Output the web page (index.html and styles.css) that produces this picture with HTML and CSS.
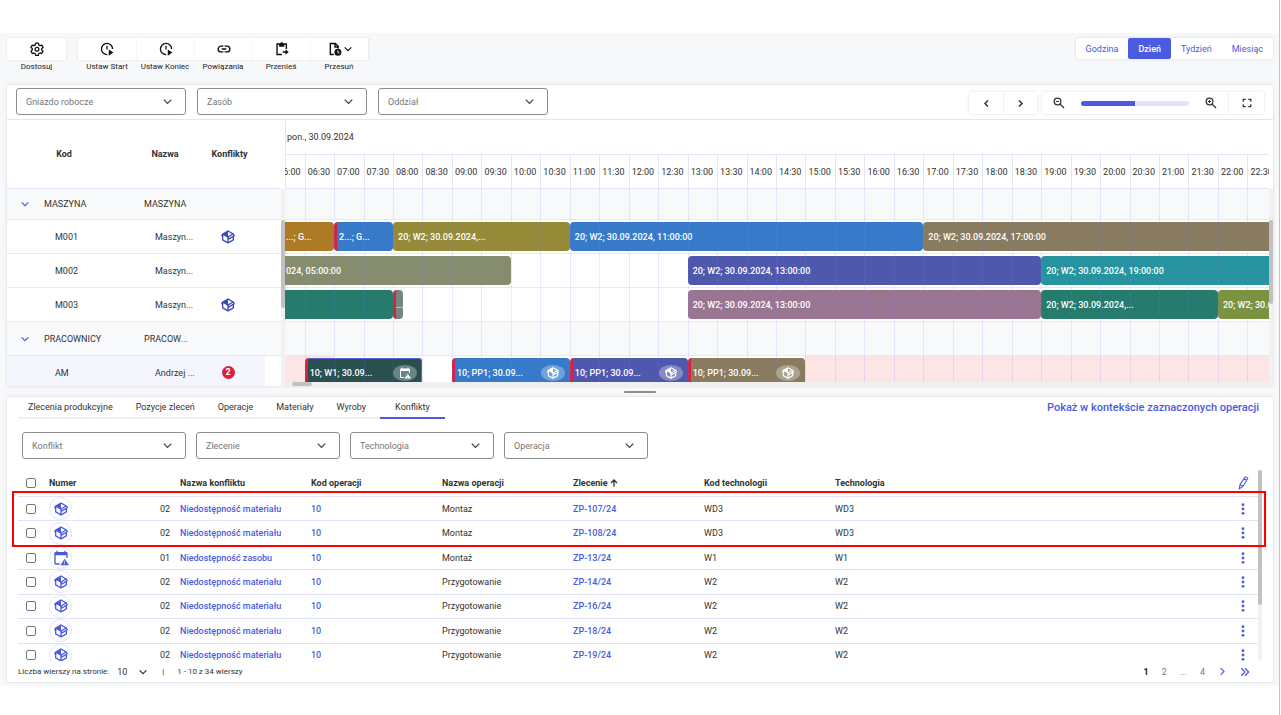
FILE: index.html
```html
<!DOCTYPE html>
<html lang="pl">
<head>
<meta charset="utf-8">
<title>Harmonogram</title>
<link rel="stylesheet" href="styles.css">
</head>
<body>
<svg class="sprite" aria-hidden="true">
  <symbol id="i-cube" viewBox="0 0 24 24"><path fill="currentColor" d="M2,10.96C1.5,10.68 1.35,10.07 1.63,9.59L3.13,7C3.24,6.8 3.41,6.66 3.6,6.58L11.43,2.18C11.59,2.06 11.79,2 12,2C12.21,2 12.41,2.06 12.57,2.18L20.47,6.62C20.66,6.72 20.82,6.88 20.91,7.08L22.36,9.6C22.64,10.08 22.47,10.69 22,10.96L21,11.54V16.5C21,16.88 20.79,17.21 20.47,17.38L12.57,21.82C12.41,21.94 12.21,22 12,22C11.79,22 11.59,21.94 11.43,21.82L3.53,17.38C3.21,17.21 3,16.88 3,16.5V10.96C2.7,11.13 2.32,11.14 2,10.96M12,4.15L12,10.85L17.96,7.5L12,4.15M5,15.91L11,19.29V12.58L5,9.21V15.91M19,15.91V12.69L14,15.59C13.67,15.77 13.3,15.76 13,15.6V19.29L19,15.91M13.85,13.36L20.13,9.73L19.55,8.72L13.27,12.35L13.85,13.36Z"/></symbol>
  <symbol id="i-calendar" viewBox="0 0 24 24"><path fill="currentColor" d="M2 5a2 2 0 0 1 2-2h1V1h2v2h10V1h2v2h1a2 2 0 0 1 2 2v7h-2V8H4v12h6v2H4a2 2 0 0 1-2-2zM17.500 13L24 23H11zM17 16v3h1v-3zm0 4v1.500h1V20z"/></symbol>
  <symbol id="i-gear" viewBox="0 0 24 24"><path fill="none" stroke="currentColor" stroke-width="2.200" stroke-linejoin="round" d="M9.700 2h4.600l.6 3 2.300 1.300 2.900-1 2.300 4-2.300 2v2.500l2.300 2-2.300 4-2.900-1-2.300 1.300-.6 2.900H9.700l-.6-2.900-2.300-1.300-2.900 1-2.300-4 2.300-2v-2.500l-2.300-2 2.300-4 2.900 1L9.100 5z"/><circle cx="12" cy="12.500" r="3.200" fill="none" stroke="currentColor" stroke-width="2.200"/></symbol>
  <symbol id="i-clock" viewBox="0 0 24 24"><path fill="none" stroke="currentColor" stroke-width="2.200" d="M12.500 21.500A9.500 9.500 0 1 1 21.500 12M12 6.500V13"/><path fill="currentColor" d="M15 13l8 5-8 5.500z"/></symbol>
  <symbol id="i-link" viewBox="0 0 24 24"><path fill="none" stroke="currentColor" stroke-width="2.400" d="M11 7H7a5 5 0 0 0 0 10h4M13 7h4a5 5 0 0 1 0 10h-4M8 12h8"/></symbol>
  <symbol id="i-clipboard" viewBox="0 0 24 24"><path fill="none" stroke="currentColor" stroke-width="2.400" d="M12 21.500H3.500v-18h16V12"/><path fill="currentColor" d="M7 3h2a2.500 2.500 0 0 1 5 0h2v5H7zM13 16h5v-3.500l5.500 4.700-5.500 4.600V18.400h-5z"/></symbol>
  <symbol id="i-file" viewBox="0 0 24 24"><path fill="none" stroke="currentColor" stroke-width="2.400" d="M10 21.500H4v-19h8.500l5 5V11M12 3v5.500h5"/><path fill="currentColor" fill-rule="evenodd" d="M17 11.500a6 6 0 1 1 0 12 6 6 0 0 1 0-12zm-.8 2.500v4l2.800 2 .9-1.200-2.200-1.500V14z"/></symbol>
  <symbol id="i-down" viewBox="0 0 24 24"><path fill="none" stroke="currentColor" stroke-width="3.600" d="M2 7l10 10L22 7"/></symbol>
  <symbol id="i-left" viewBox="0 0 24 24"><path fill="none" stroke="currentColor" stroke-width="4" d="M16 4l-8 8 8 8"/></symbol>
  <symbol id="i-right" viewBox="0 0 24 24"><path fill="none" stroke="currentColor" stroke-width="4" d="M8 4l8 8-8 8"/></symbol>
  <symbol id="i-next" viewBox="0 0 24 24"><path fill="none" stroke="currentColor" stroke-width="3" d="M7 3l9 9-9 9"/></symbol>
  <symbol id="i-last" viewBox="0 0 24 24"><path fill="none" stroke="currentColor" stroke-width="3" d="M3 3l9 9-9 9M12 3l9 9-9 9"/></symbol>
  <symbol id="i-minus" viewBox="0 0 24 24"><g fill="none" stroke="currentColor" stroke-width="2.400"><circle cx="9" cy="9" r="6.800"/><path d="M6 9h6M14 14l8 8"/></g></symbol>
  <symbol id="i-plus" viewBox="0 0 24 24"><g fill="none" stroke="currentColor" stroke-width="2.400"><circle cx="9" cy="9" r="6.800"/><path d="M6 9h6M9 6v6M14 14l8 8"/></g></symbol>
  <symbol id="i-full" viewBox="0 0 24 24"><path fill="none" stroke="currentColor" stroke-width="3" d="M3 9V3.500h6M15 3.500h6V9M21 15v5.500h-6M9 20.500H3V15"/></symbol>
  <symbol id="i-up" viewBox="0 0 24 24"><path fill="none" stroke="currentColor" stroke-width="4" d="M12 23V4M3 12l9-9 9 9"/></symbol>
  <symbol id="i-pencil" viewBox="0 0 20 26"><path fill="none" stroke="currentColor" stroke-width="2" stroke-linejoin="round" d="M2 24l1.500-8L13 2q3-1 5 2.500L9 19zM3.500 16L9 19M11 5l5.500 3.500"/></symbol>
  <symbol id="i-dots" viewBox="0 0 4 12"><g fill="currentColor"><circle cx="2" cy="1.700" r="1.400"/><circle cx="2" cy="6" r="1.400"/><circle cx="2" cy="10.300" r="1.400"/></g></symbol>
</svg>

<main class="app">
  <header class="topbar">
    <div class="tools">
      <div class="tool solo"><button type="button" aria-labelledby="t1"><svg class="ic14"><use href="#i-gear"/></svg></button><span id="t1">Dostosuj</span></div>
    </div>
    <div class="tools">
      <div class="tool"><button type="button" aria-labelledby="t2"><svg class="ic14"><use href="#i-clock"/></svg></button><span id="t2">Ustaw Start</span></div>
      <div class="tool"><button type="button" aria-labelledby="t3"><svg class="ic14"><use href="#i-clock"/></svg></button><span id="t3">Ustaw Koniec</span></div>
      <div class="tool"><button type="button" aria-labelledby="t4"><svg class="ic14"><use href="#i-link"/></svg></button><span id="t4">Powiązania</span></div>
      <div class="tool"><button type="button" aria-labelledby="t5"><svg class="ic14"><use href="#i-clipboard"/></svg></button><span id="t5">Przenieś</span></div>
      <div class="tool"><button type="button" aria-labelledby="t6"><svg class="ic14"><use href="#i-file"/></svg><svg class="ic8"><use href="#i-down"/></svg></button><span id="t6">Przesuń</span></div>
    </div>
    <div class="scale">
      <button type="button">Godzina</button><button type="button" class="active">Dzień</button><button type="button">Tydzień</button><button type="button">Miesiąc</button>
    </div>
  </header>

  <section class="card planner">
    <div class="filterbar">
      <div class="field wide"><select aria-label="Gniazdo robocze"><option>Gniazdo robocze</option></select><svg class="ic9"><use href="#i-down"/></svg></div>
      <div class="field wide"><select aria-label="Zasób"><option>Zasób</option></select><svg class="ic9"><use href="#i-down"/></svg></div>
      <div class="field wide"><select aria-label="Oddział"><option>Oddział</option></select><svg class="ic9"><use href="#i-down"/></svg></div>
      <div class="group nav">
        <button type="button" aria-label="Poprzedni"><svg class="ic9"><use href="#i-left"/></svg></button>
        <button type="button" aria-label="Następny"><svg class="ic9"><use href="#i-right"/></svg></button>
      </div>
      <div class="group zoom">
        <button type="button" aria-label="Pomniejsz"><svg class="ic12"><use href="#i-minus"/></svg></button>
        <input type="range" class="range" aria-label="Skala" min="0" max="100" value="50">
        <button type="button" aria-label="Powiększ"><svg class="ic12"><use href="#i-plus"/></svg></button>
        <button type="button" class="full" aria-label="Pełny ekran"><svg class="ic10"><use href="#i-full"/></svg></button>
      </div>
    </div>
    <div class="gantt">
      <table class="resources">
        <colgroup><col class="c-code"><col class="c-name"><col class="c-conf"><col class="c-gap"><col></colgroup>
        <thead><tr><th>Kod</th><th>Nazwa</th><th>Konflikty</th><th></th><th></th></tr></thead>
        <tbody>
          <tr class="parent first"><td><span class="code"><svg class="ic8"><use href="#i-down"/></svg>MASZYNA</span></td><td>MASZYNA</td><td></td><td></td><td></td></tr>
          <tr><td>M001</td><td>Maszyn...</td><td><svg class="ic16"><use href="#i-cube"/></svg></td><td></td><td></td></tr>
          <tr><td>M002</td><td>Maszyn...</td><td></td><td></td><td></td></tr>
          <tr><td>M003</td><td>Maszyn...</td><td><svg class="ic16"><use href="#i-cube"/></svg></td><td></td><td></td></tr>
          <tr class="parent"><td><span class="code"><svg class="ic8"><use href="#i-down"/></svg>PRACOWNICY</span></td><td>PRACOW...</td><td></td><td></td><td></td></tr>
          <tr class="picked"><td>AM</td><td>Andrzej ...</td><td><span class="count">2</span></td><td></td><td></td></tr>
        </tbody>
      </table>
      <div class="vscroll"><span class="track"><span class="thumb left"></span></span></div>
      <div class="timeline">
        <div class="day">pon., 30.09.2024</div>
        <div class="slots hours" id="hours"></div>
        <div class="lanes">
          <div class="lane parent first"></div>
          <div class="lane slots">
            <div class="bar brown from-left" style="grid-column:1/3">...; G...</div>
            <div class="bar blue alert" style="grid-column:3/5">2...; G...</div>
            <div class="bar olive" style="grid-column:5/11">20; W2; 30.09.2024,...</div>
            <div class="bar blue" style="grid-column:11/23">20; W2; 30.09.2024, 11:00:00</div>
            <div class="bar taupe to-right" style="grid-column:23/35">20; W2; 30.09.2024, 17:00:00</div>
          </div>
          <div class="lane slots">
            <div class="bar sage from-left" style="grid-column:1/9">024, 05:00:00</div>
            <div class="bar indigo" style="grid-column:15/27">20; W2; 30.09.2024, 13:00:00</div>
            <div class="bar teal to-right" style="grid-column:27/35">20; W2; 30.09.2024, 19:00:00</div>
          </div>
          <div class="lane slots">
            <div class="bar green from-left" style="grid-column:1/5"></div>
            <div class="bar grey alert tiny" style="grid-column:5/6">...</div>
            <div class="bar mauve" style="grid-column:15/27">20; W2; 30.09.2024, 13:00:00</div>
            <div class="bar green" style="grid-column:27/33">20; W2; 30.09.2024,...</div>
            <div class="bar lime to-right" style="grid-column:33/35">20; W2; 30.09...</div>
          </div>
          <div class="lane parent"></div>
          <div class="lane slots last">
            <div class="off" style="grid-column:1/3"></div>
            <div class="off" style="grid-column:19/35"></div>
            <div class="bar dark alert chosen" style="grid-column:2/6"><span>10; W1; 30.09...</span><i class="pill"><svg class="ic12"><use href="#i-calendar"/></svg></i></div>
            <div class="bar blue alert" style="grid-column:7/11"><span>10; PP1; 30.09...</span><i class="pill"><svg class="ic14"><use href="#i-cube"/></svg></i></div>
            <div class="bar indigo alert" style="grid-column:11/15"><span>10; PP1; 30.09...</span><i class="pill"><svg class="ic14"><use href="#i-cube"/></svg></i></div>
            <div class="bar taupe alert" style="grid-column:15/19"><span>10; PP1; 30.09...</span><i class="pill"><svg class="ic14"><use href="#i-cube"/></svg></i></div>
          </div>
          <div class="slots lines" id="lines"></div>
        </div>
        <div class="hscroll"><span></span></div>
      </div>
      <div class="vscroll"><span class="track"><span class="thumb"></span></span></div>
    </div>
  </section>

  <div class="splitter"><span></span></div>

  <section class="card details">
    <div class="tabrow">
      <nav class="tabs" role="tablist">
        <button type="button" role="tab">Zlecenia produkcyjne</button><button type="button" role="tab">Pozycje zleceń</button><button type="button" role="tab">Operacje</button><button type="button" role="tab">Materiały</button><button type="button" role="tab">Wyroby</button><button type="button" role="tab" class="active" aria-selected="true">Konflikty</button>
      </nav>
      <a class="context" href="#">Pokaż w kontekście zaznaczonych operacji</a>
    </div>
    <div class="filters">
      <div class="field first"><select aria-label="Konflikt"><option>Konflikt</option></select><svg class="ic9"><use href="#i-down"/></svg></div>
      <div class="field"><select aria-label="Zlecenie"><option>Zlecenie</option></select><svg class="ic9"><use href="#i-down"/></svg></div>
      <div class="field"><select aria-label="Technologia"><option>Technologia</option></select><svg class="ic9"><use href="#i-down"/></svg></div>
      <div class="field"><select aria-label="Operacja"><option>Operacja</option></select><svg class="ic9"><use href="#i-down"/></svg></div>
    </div>
    <div class="tablewrap">
      <div class="clip">
        <table class="conflicts">
          <colgroup><col class="k-check"><col class="k"><col class="k"><col class="k"><col class="k"><col class="k"><col class="k"><col><col class="k-menu"></colgroup>
          <thead><tr><th><input type="checkbox" aria-label="Zaznacz wszystkie"></th><th>Numer</th><th>Nazwa konfliktu</th><th>Kod operacji</th><th>Nazwa operacji</th><th>Zlecenie <svg class="ic8"><use href="#i-up"/></svg></th><th>Kod technologii</th><th>Technologia</th><th><button type="button" aria-label="Edytuj kolumny"><svg class="pencil"><use href="#i-pencil"/></svg></button></th></tr></thead>
          <tbody id="rows"></tbody>
        </table>
      </div>
      <div class="tscroll"><span></span></div>
      <div class="highlight"></div>
    </div>
    <footer class="pager">
      <label for="size">Liczba wierszy na stronie:</label>
      <span class="size"><select id="size"><option>10</option></select><svg class="ic8"><use href="#i-down"/></svg></span>
      <span class="bar-sep">|</span>
      <span>1 - 10 z 34 wierszy</span>
      <nav class="pages">
        <button type="button" class="current">1</button><button type="button">2</button><span>...</span><button type="button">4</button><button type="button" class="go" aria-label="Następna"><svg class="ic9"><use href="#i-next"/></svg></button><button type="button" class="go" aria-label="Ostatnia"><svg class="ic10"><use href="#i-last"/></svg></button>
      </nav>
    </footer>
  </section>
</main>
<script src="app.js"></script>
</body>
</html>
```

FILE: styles.css
```css
* { box-sizing: border-box; }
html { background: #fff; padding-right: 1px; }
body {
  margin: 0;
  padding-top: 33px;
  min-height: 100vh;
  border-right: 1px solid #c4c4c6;
  font-family: Roboto, "Noto Sans", sans-serif;
  font-size: 9px;
  line-height: 12px;
  color: #333;
}
button, select, input { font: inherit; color: inherit; margin: 0; }
button { border: 0; background: none; padding: 0; cursor: pointer; }
a { color: #4a5be0; text-decoration: none; }
svg { display: block; flex: none; }
.sprite { position: absolute; width: 0; height: 0; }
.ic8 { width: 8px; height: 8px; }
.ic9 { width: 9px; height: 9px; }
.ic10 { width: 10px; height: 10px; }
.ic12 { width: 12px; height: 12px; }
.ic14 { width: 14px; height: 14px; }
.ic16 { width: 16px; height: 16px; }

.app { background: #f7f8fa; padding: 5px 6px 4px 7px; }
.card { background: #fff; border-radius: 2px; box-shadow: 0 0 3px rgba(0, 0, 0, .16); }

/* Top bar */
.topbar { display: flex; align-items: flex-start; gap: 12px; height: 47px; }
.tools { display: flex; }
.tool { width: 58px; display: flex; flex-direction: column; align-items: center; gap: 1px; font-size: 8px; white-space: nowrap; color: #222; }
.tool.solo { width: 59px; }
.tool button {
  width: 100%; height: 22px; background: #fff; color: #111;
  display: flex; align-items: center; justify-content: center; gap: 2px;
  box-shadow: 0 0 2px rgba(0, 0, 0, .13);
}
.tool + .tool button { box-shadow: 1px 0 2px rgba(0, 0, 0, .08); border-left: 1px solid #f6f6f6; }
.scale { margin-left: auto; display: flex; background: #fff; box-shadow: 0 0 3px rgba(0, 0, 0, .14); border-radius: 2px; }
.scale button { height: 21px; padding: 0 10px; color: #4a5be0; }
.scale .active { background: #4a5be0; color: #fff; font-weight: 500; border-radius: 2px; }

/* Select fields */
.field { position: relative; width: 144px; height: 27px; display: flex; align-items: center; }
.field select {
  appearance: none; width: 100%; height: 100%; padding: 0 24px 0 9px;
  border: 1px solid #8c8c8c; border-radius: 3px; background: #fff; color: #777; font-size: 9px;
}
.field svg { position: absolute; right: 14px; color: #444; pointer-events: none; }
.field.wide { width: 170px; }
.field.first { width: 164px; }

/* Planner */
.filterbar { display: flex; align-items: flex-start; gap: 11px; height: 35px; padding: 3px 9px 0; border-bottom: 1px solid #e4e4f6; }
.group { display: flex; align-items: center; height: 22px; margin-top: 4px; box-shadow: 0 0 3px rgba(0, 0, 0, .14); border-radius: 2px; color: #333; }
.group button { width: 34px; height: 22px; display: flex; align-items: center; justify-content: center; }
.group button + button { border-left: 1px solid #f2f2f2; }
.group .full { width: 36px; }
.nav { margin-left: auto; }
.zoom { margin-left: -6px; }
.range {
  appearance: none; width: 108px; height: 5px; margin: 0 5px; border-radius: 3px;
  background: linear-gradient(90deg, #4a5be0 50%, #e2e2fa 50%);
}
.range::-webkit-slider-thumb { appearance: none; width: 0; height: 0; }
.gantt { display: flex; height: 266px; overflow: hidden; }
.resources { width: 274px; flex: none; border-collapse: separate; border-spacing: 0; table-layout: fixed; height: 270px; }
.c-code { width: 114px; }
.c-name { width: 88px; }
.c-conf { width: 41px; }
.c-gap { width: 15px; }
.resources th { height: 69px; padding: 0; font-weight: 700; border-bottom: 1px solid #e4e4f6; }
.resources td { height: 34px; padding: 0; border-bottom: 1px solid #e8e8f8; white-space: nowrap; }
.resources tr.first td { height: 31px; }
.resources td:nth-child(1) { padding-left: 48px; }
.resources td:nth-child(2) { padding-left: 34px; }
.resources td svg, .count { margin: 0 auto; }
.resources td:nth-child(3) { color: #3b4ab8; padding-right: 3px; }
.resources .parent td { background: #f8f9fb; padding-left: 0; }
.resources .parent td:nth-child(2) { padding-left: 23px; }
.code { display: flex; align-items: center; }
.resources .code svg { margin: 0 15px 0 14px; color: #4a5be0; }
.picked td { background: #f5f5fe; }
.resources .picked td:last-child { background: #fff; }
.count { display: block; width: 13px; height: 13px; border-radius: 50%; background: #d9203f; color: #fff; font-weight: 700; line-height: 13px; text-align: center; }
.vscroll { width: 4px; flex: none; padding-top: 69px; display: flex; }
.track { width: 4px; background: #f1f1f1; padding-top: 31px; }
.thumb { display: block; height: 84px; border-radius: 2px; background: #c1c1c1; }
.thumb.left { height: 88px; }

.timeline { flex: 1; min-width: 0; display: flex; flex-direction: column; box-shadow: inset 1px 0 #e4e4f6; overflow: hidden; }
.day { height: 35px; padding: 0 2px; line-height: 34px; border-bottom: 1px solid #e4e4f6; flex: none; }
.slots { display: grid; grid-template-columns: minmax(0, 20fr) repeat(32, minmax(0, 30fr)) minmax(0, 22fr); }
.hours { height: 34px; flex: none; border-bottom: 1px solid #e4e4f6; line-height: 34px; }
.hours span { border-left: 1px solid #e4e4f6; padding-left: 2px; overflow: hidden; white-space: nowrap; }
.hours span:first-child { display: flex; justify-content: flex-end; border: 0; padding-right: 4px; }
.lanes { flex: 1; min-height: 0; position: relative; overflow: hidden; }
.lane { height: 34px; border-bottom: 1px solid #e8e8f8; align-items: start; grid-template-rows: 33px; }
.lane.first { height: 31px; }
.lane.parent { background: #f8f9fb; }
.lines { position: absolute; inset: 0; pointer-events: none; }
.lines span + span { border-left: 1px solid rgba(130, 120, 240, .16); }
.bar {
  grid-row: 1; height: 29px; margin-top: 2px; padding: 0 5px; border-radius: 4px;
  display: flex; align-items: center; color: #fff; font-weight: 500;
  white-space: nowrap; overflow: hidden;
}
.from-left { border-radius: 0 4px 4px 0; padding-left: 1px; }
.to-right { border-radius: 4px 0 0 4px; }
.alert { border-left: 3px solid #d9203f; padding-left: 2px; }
.tiny { width: 10px; padding: 0; }
.chosen { box-shadow: inset 0 1px #5a62d8, inset -1px 0 #5a62d8; }
.off { grid-row: 1; height: 33px; background: #fde5e6; }
.brown { background: #ad7b25; }
.blue { background: #377ac9; }
.olive { background: #958a38; }
.taupe { background: #897b5f; }
.sage { background: #868c6e; }
.indigo { background: #4e58ad; }
.teal { background: #26939f; }
.green { background: #257b6c; }
.grey { background: #758582; }
.mauve { background: #9a7592; }
.lime { background: #7b9341; }
.dark { background: #29504f; }
.pill { margin-left: auto; width: 24px; height: 16px; border-radius: 50%; background: rgba(255, 255, 255, .3); display: flex; align-items: center; justify-content: center; }
.hscroll { height: 4px; flex: none; background: #f0f0f0; padding-left: 7px; }
.hscroll span { display: block; width: 20px; height: 4px; border-radius: 2px; background: #c1c1c1; }

.splitter { height: 11px; display: flex; align-items: center; justify-content: center; }
.splitter span { width: 32px; height: 2px; border-radius: 1px; background: #8e8e92; }

/* Details */
.details { padding: 0 11px; }
.tabrow { display: flex; align-items: flex-start; justify-content: space-between; padding-right: 3px; }
.tabs { display: flex; gap: 3px; border-bottom: 2px solid #f0f0f2; }
.tabs button { height: 22px; padding: 0 10px; margin-bottom: -2px; border-bottom: 2px solid transparent; }
.tabs .active { border-color: #4a5be0; padding: 0 15px; margin-left: 1px; }
.context { font-size: 11px; font-weight: 500; line-height: 22px; }
.filters { display: flex; gap: 10px; padding: 13px 4px 11px; }
.tablewrap { position: relative; display: flex; height: 191px; }
.clip { flex: 1; min-width: 0; overflow: hidden; }
.conflicts { width: 100%; height: 198px; table-layout: fixed; border-collapse: separate; border-spacing: 0; }
.k-check { width: 31px; }
.k { width: 131px; }
.k-menu { width: 30px; }
.conflicts th { height: 27px; padding: 0; text-align: left; font-weight: 700; border-bottom: 1px solid #e4e4f6; }
.conflicts td { height: 24px; padding: 0; border-bottom: 1px solid #e2e2f8; }
.conflicts th svg { display: inline-block; vertical-align: -1px; }
.conflicts input { appearance: none; display: block; width: 10px; height: 10px; margin: 0 8px; border: 1px solid #777; border-radius: 2px; background: #fff; }
.conflicts a { font-weight: 500; }
.number { display: flex; align-items: center; justify-content: space-between; padding-right: 10px; height: 22px; }
.badge { width: 23px; height: 23px; border: 1px solid #e4e4fa; border-radius: 50%; display: flex; align-items: center; justify-content: center; color: #4a5be0; }
.conflicts td button { display: block; margin: 0 auto; color: #4a5be0; }
.conflicts th button { color: #4a5be0; display: block; margin: 0 auto; }
.conflicts .pencil { display: block; width: 11px; height: 14px; }
.dots { width: 4px; height: 12px; }
.tscroll { width: 4px; flex: none; background: #f1f1f1; border-radius: 2px; }
.tscroll span { display: block; height: 135px; background: #c1c1c1; border-radius: 2px; }
.highlight { position: absolute; left: -6px; right: -4px; top: 21px; height: 56px; border: 2px solid #f00; }
.pager { display: flex; align-items: center; height: 21px; font-size: 8px; white-space: nowrap; }
.size { position: relative; display: flex; align-items: center; margin-left: 8px; width: 32px; }
.size select { appearance: none; border: 0; background: none; padding: 0; width: 100%; font-size: 9px; }
.size svg { position: absolute; right: 2px; pointer-events: none; }
.bar-sep { margin: 0 13px; }
.pages { margin-left: auto; display: flex; align-items: center; gap: 13px; font-size: 9px; color: #777; padding-right: 12px; }
.pages .current { color: #222; font-weight: 700; }
.pages .go { color: #4a5be0; }
```

FILE: app.js
```js
const hours = document.getElementById('hours');
const lines = document.getElementById('lines');
for (let m = 360; m <= 1350; m += 30) {
  const tick = document.createElement('span');
  tick.textContent = String(Math.floor(m / 60)).padStart(2, '0') + ':' + String(m % 60).padStart(2, '0');
  hours.append(tick);
  lines.append(document.createElement('span'));
}

const conflicts = [
  ['cube', '02', 'Niedostępność materiału', 'Montaz', 'ZP-107/24', 'WD3'],
  ['cube', '02', 'Niedostępność materiału', 'Montaz', 'ZP-108/24', 'WD3'],
  ['calendar', '01', 'Niedostępność zasobu', 'Montaż', 'ZP-13/24', 'W1'],
  ['cube', '02', 'Niedostępność materiału', 'Przygotowanie', 'ZP-14/24', 'W2'],
  ['cube', '02', 'Niedostępność materiału', 'Przygotowanie', 'ZP-16/24', 'W2'],
  ['cube', '02', 'Niedostępność materiału', 'Przygotowanie', 'ZP-18/24', 'W2'],
  ['cube', '02', 'Niedostępność materiału', 'Przygotowanie', 'ZP-19/24', 'W2']
];
document.getElementById('rows').innerHTML = conflicts.map(([icon, num, name, op, order, tech]) => `
  <tr>
    <td><input type="checkbox" aria-label="Zaznacz ${order}"></td>
    <td><div class="number"><span class="badge"><svg class="ic16"><use href="#i-${icon}"/></svg></span>${num}</div></td>
    <td><a href="#">${name}</a></td>
    <td><a href="#">10</a></td>
    <td>${op}</td>
    <td><a href="#">${order}</a></td>
    <td>${tech}</td>
    <td>${tech}</td>
    <td><button type="button" aria-label="Menu"><svg class="dots"><use href="#i-dots"/></svg></button></td>
  </tr>`).join('');
```
